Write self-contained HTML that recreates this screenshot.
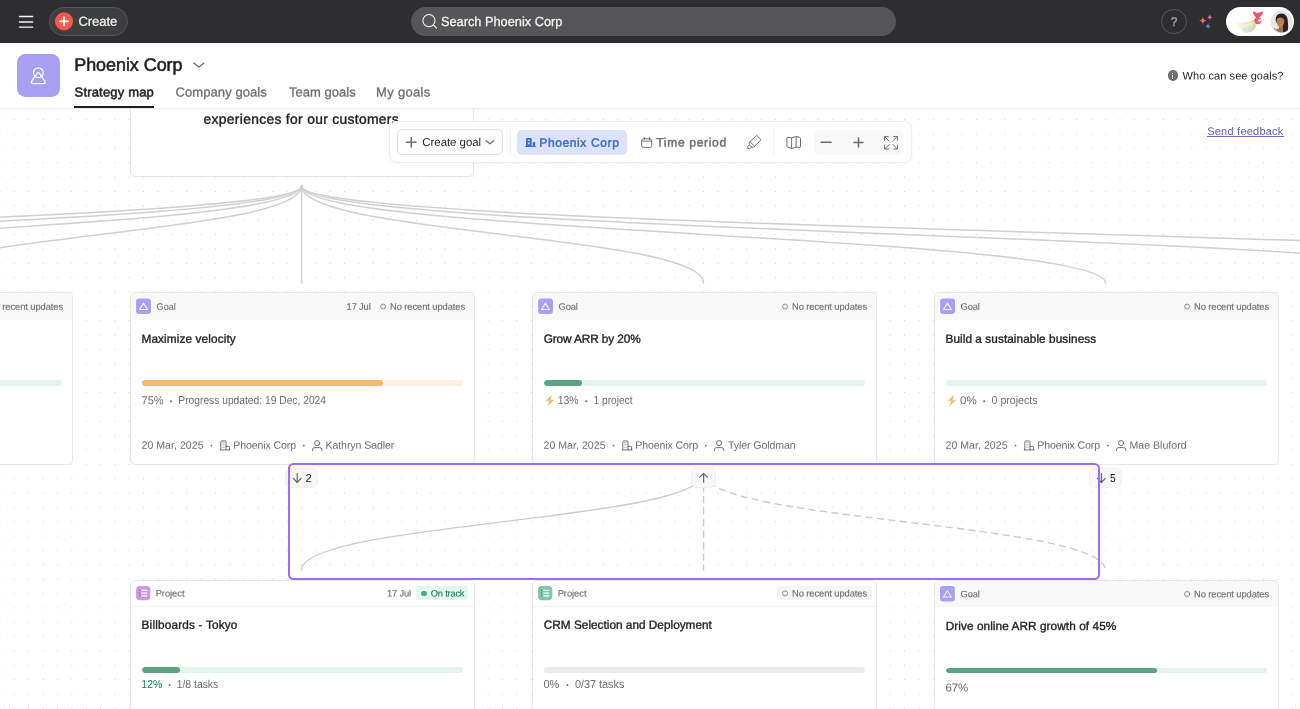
<!DOCTYPE html>
<html><head><meta charset="utf-8"><title>Strategy map</title>
<style>
html,body{margin:0;padding:0}
body{width:1300px;height:709px;overflow:hidden;position:relative;background:#fff;font-family:"Liberation Sans",sans-serif;}
#w{position:absolute;left:0;top:0;width:1300px;height:709px;overflow:hidden;will-change:transform}
.t{position:absolute;white-space:pre;line-height:20px;transform-origin:0 70%;}
.a{position:absolute;box-sizing:border-box;}
#canvas{left:0;top:109px;width:1300px;height:600px;background-color:#fff;
 background-image:radial-gradient(circle at center,#cccccc 0,#cccccc 0.5px,rgba(204,204,204,0) 0.95px);
 background-size:14.36px 14.36px;background-position:-7.23px 3.5px;}
.card{background:#fff;border:1px solid #e8e7e7;border-radius:5px;overflow:hidden}
.ico{border-radius:3px}
.bar{height:5.5px;border-radius:3px;overflow:hidden}
.bar i{display:block;height:100%;border-radius:3px}
.badge{background:#f8f7f7;border-radius:6px;border:1px solid #f2f0ef}
svg{position:absolute;overflow:visible}
.v{left:0;top:0}
</style></head><body><div id="w">
<div id="canvas" class="a"></div>

<svg class="a" style="left:0;top:0" width="1300" height="709" viewBox="0 0 1300 709"><g fill="none" stroke="#d1cfcf" stroke-width="1.5" stroke-linecap="round">
<path d="M301.6,186.0 C301.6,234.5 -1306.4,234.5 -1306.4,283.0"/>
<path d="M301.6,186.0 C301.6,234.5 -904.4,234.5 -904.4,283.0"/>
<path d="M301.6,186.0 C301.6,234.5 -502.4,234.5 -502.4,283.0"/>
<path d="M301.6,186.0 C301.6,234.5 -100.4,234.5 -100.4,283.0"/>
<path d="M301.6,186 L301.6,283"/>
<path d="M301.6,186.0 C301.6,234.5 703.6,234.5 703.6,283.0"/>
<path d="M301.6,186.0 C301.6,234.5 1105.6,234.5 1105.6,283.0"/>
<path d="M301.6,186.0 C301.6,234.5 1507.6,234.5 1507.6,283.0"/>
<path d="M301.6,186.0 C301.6,234.5 1909.6,234.5 1909.6,283.0"/>
</g><g fill="none" stroke="#cccaca" stroke-width="1.35">
<path d="M703.6,473.0 C703.6,521.8 301.3,521.8 301.3,570.5"/>
<path d="M703.6,473 L703.6,570.5" stroke-dasharray="7.2 4.3"/>
<path d="M703.6,473.0 C703.6,521.8 1105.5,521.8 1105.5,570.5" stroke-dasharray="7.2 4.3"/>
</g></svg>
<div class="a card" style="left:-272px;top:292px;width:344.5px;height:173px;"></div>
<div class="a" style="left:-271px;top:293px;width:342.5px;height:27.1px;background:#f9f8f8;border-radius:4px 4px 0 0"></div>
<span class="t" style="left:-12px;top:296px;font-size:9.4px;color:#6d6e6f;transform:translate(0.05px,0.75px) rotate(.03deg);letter-spacing:-0.097px;-webkit-text-stroke:0.12px currentColor;">No recent updates</span>
<div class="a bar" style="left:-260px;top:380.4px;width:321px;background:#e4f4ed"></div>
<div class="a card" style="left:130px;top:292px;width:344.5px;height:173px;"></div>
<div class="a" style="left:131px;top:293px;width:342.5px;height:27.1px;background:#f9f8f8;border-radius:4px 4px 0 0"></div>
<svg class="v" width="1300" height="709" viewBox="0 0 1300 709"><g transform="translate(136.1,298.4)"><rect width="14.9" height="15.5" rx="2.9" fill="#a8a0f4"/><path d="M7.4 4.75L11.3 11.05H3.5Z" fill="none" stroke="#fff" stroke-opacity=".88" stroke-width="1.05" stroke-linejoin="round"/></g></svg>
<span class="t" style="left:156px;top:296px;font-size:9.4px;color:#6d6e6f;transform:translate(0.57px,0.75px) rotate(.03deg) scaleX(0.9680);-webkit-text-stroke:0.12px currentColor;">Goal</span>
<span class="t" style="left:346px;top:296px;font-size:9.4px;color:#6d6e6f;transform:translate(0.6px,0.75px) rotate(.03deg);letter-spacing:-0.180px;-webkit-text-stroke:0.12px currentColor;">17 Jul</span>
<svg class="v" width="1300" height="709" viewBox="0 0 1300 709"><circle cx="383.10" cy="306.60" r="2.5" fill="none" stroke="#7f8081" stroke-width=".9"/></svg>
<span class="t" style="left:390px;top:296px;font-size:9.4px;color:#6d6e6f;transform:translate(0.05px,0.75px) rotate(.03deg);letter-spacing:-0.097px;-webkit-text-stroke:0.12px currentColor;">No recent updates</span>
<span class="t" style="left:141px;top:328px;font-size:11.8px;color:#1e1f21;transform:translate(0.45px,0.75px) rotate(.03deg);letter-spacing:0.116px;-webkit-text-stroke:0.35px currentColor;">Maximize velocity</span>
<div class="a bar" style="left:142px;top:380.4px;width:321px;background:#fdf0e2"><i style="width:240.5px;background:#f1bd6c"></i></div>
<span class="t" style="left:141px;top:390px;font-size:11.5px;color:#6d6e6f;transform:translate(0.52px,0.25px) rotate(.03deg) scaleX(0.9618);">75%</span>
<svg class="v" width="1300" height="709" viewBox="0 0 1300 709"><circle cx="171.05" cy="401.30" r="1.05" fill="#6d6e6f"/></svg>
<span class="t" style="left:178px;top:390px;font-size:11.5px;color:#6d6e6f;transform:translate(0.31px,0.25px) rotate(.03deg) scaleX(0.8919);">Progress updated: 19 Dec, 2024</span>
<span class="t" style="left:141px;top:434px;font-size:10.6px;color:#6d6e6f;transform:translate(0.5px,0.75px) rotate(.03deg);letter-spacing:0.018px;">20 Mar, 2025</span>
<svg class="v" width="1300" height="709" viewBox="0 0 1300 709"><circle cx="211.50" cy="445.60" r="0.9" fill="#6d6e6f"/></svg>
<svg class="v" width="1300" height="709" viewBox="0 0 1300 709"><g transform="translate(219.9,440.1)"><g fill="none" stroke="#6d6e6f" stroke-width=".95" stroke-linejoin="round" stroke-linecap="round"><path d="M.9 9.8V1.7Q.9.8 1.8.8H5.2Q6.1.8 6.1 1.7V9.8"/><path d="M6.1 6.3H8.9Q9.6 6.3 9.6 7V9.8"/><path d="M.3 9.8H10.1"/><path d="M2.5 2.5H4.6M2.5 4.6H4.6M2.5 7.1H4.6" stroke-width=".7" stroke="#9c9b9c"/></g></g></svg>
<span class="t" style="left:233px;top:434px;font-size:10.6px;color:#6d6e6f;transform:translate(0.35px,0.75px) rotate(.03deg);letter-spacing:-0.127px;">Phoenix Corp</span>
<svg class="v" width="1300" height="709" viewBox="0 0 1300 709"><circle cx="303.80" cy="445.60" r="0.9" fill="#6d6e6f"/></svg>
<svg class="v" width="1300" height="709" viewBox="0 0 1300 709"><g transform="translate(312,440)"><g fill="none" stroke="#6d6e6f" stroke-width="1" stroke-linecap="round"><circle cx="5.1" cy="3.1" r="2.55"/><path d="M.5 10.6V9.4Q.5 7.6 2.8 7.6H7.5Q9.8 7.6 9.8 9.4V10.6"/></g></g></svg>
<span class="t" style="left:325px;top:434px;font-size:10.6px;color:#6d6e6f;transform:translate(0.45px,0.75px) rotate(.03deg);letter-spacing:-0.088px;">Kathryn Sadler</span>
<div class="a card" style="left:532px;top:292px;width:344.5px;height:173px;"></div>
<div class="a" style="left:533px;top:293px;width:342.5px;height:27.1px;background:#f9f8f8;border-radius:4px 4px 0 0"></div>
<svg class="v" width="1300" height="709" viewBox="0 0 1300 709"><g transform="translate(538.1,298.4)"><rect width="14.9" height="15.5" rx="2.9" fill="#a8a0f4"/><path d="M7.4 4.75L11.3 11.05H3.5Z" fill="none" stroke="#fff" stroke-opacity=".88" stroke-width="1.05" stroke-linejoin="round"/></g></svg>
<span class="t" style="left:558px;top:296px;font-size:9.4px;color:#6d6e6f;transform:translate(0.55px,0.75px) rotate(.03deg);letter-spacing:-0.200px;-webkit-text-stroke:0.12px currentColor;">Goal</span>
<svg class="v" width="1300" height="709" viewBox="0 0 1300 709"><circle cx="785.10" cy="306.60" r="2.5" fill="none" stroke="#7f8081" stroke-width=".9"/></svg>
<span class="t" style="left:792px;top:296px;font-size:9.4px;color:#6d6e6f;transform:translate(0.05px,0.75px) rotate(.03deg);letter-spacing:-0.097px;-webkit-text-stroke:0.12px currentColor;">No recent updates</span>
<span class="t" style="left:543px;top:328px;font-size:11.8px;color:#1e1f21;transform:translate(0.7px,0.75px) rotate(.03deg);letter-spacing:-0.096px;-webkit-text-stroke:0.35px currentColor;">Grow ARR by 20%</span>
<div class="a bar" style="left:544px;top:380.4px;width:321px;background:#e4f4ed"><i style="width:38.4px;background:#5da283"></i></div>
<svg class="v" width="1300" height="709" viewBox="0 0 1300 709"><g transform="translate(545.6,395.2)"><path d="M5.9.4L.3 5.5H4L2.3 10.4L8.2 5H4.9Z" fill="#f1bd6c" stroke="#f1bd6c" stroke-width=".5" stroke-linejoin="round"/></g></svg>
<span class="t" style="left:557px;top:390px;font-size:11.5px;color:#6d6e6f;transform:translate(0.72px,0.25px) rotate(.03deg) scaleX(0.9091);">13%</span>
<svg class="v" width="1300" height="709" viewBox="0 0 1300 709"><circle cx="586.30" cy="401.30" r="1.05" fill="#6d6e6f"/></svg>
<span class="t" style="left:593px;top:390px;font-size:11.5px;color:#6d6e6f;transform:translate(0.54px,0.25px) rotate(.03deg) scaleX(0.8832);">1 project</span>
<span class="t" style="left:543px;top:434px;font-size:10.6px;color:#6d6e6f;transform:translate(0.5px,0.75px) rotate(.03deg);letter-spacing:0.018px;">20 Mar, 2025</span>
<svg class="v" width="1300" height="709" viewBox="0 0 1300 709"><circle cx="613.50" cy="445.60" r="0.9" fill="#6d6e6f"/></svg>
<svg class="v" width="1300" height="709" viewBox="0 0 1300 709"><g transform="translate(621.9,440.1)"><g fill="none" stroke="#6d6e6f" stroke-width=".95" stroke-linejoin="round" stroke-linecap="round"><path d="M.9 9.8V1.7Q.9.8 1.8.8H5.2Q6.1.8 6.1 1.7V9.8"/><path d="M6.1 6.3H8.9Q9.6 6.3 9.6 7V9.8"/><path d="M.3 9.8H10.1"/><path d="M2.5 2.5H4.6M2.5 4.6H4.6M2.5 7.1H4.6" stroke-width=".7" stroke="#9c9b9c"/></g></g></svg>
<span class="t" style="left:635px;top:434px;font-size:10.6px;color:#6d6e6f;transform:translate(0.35px,0.75px) rotate(.03deg);letter-spacing:-0.127px;">Phoenix Corp</span>
<svg class="v" width="1300" height="709" viewBox="0 0 1300 709"><circle cx="705.80" cy="445.60" r="0.9" fill="#6d6e6f"/></svg>
<svg class="v" width="1300" height="709" viewBox="0 0 1300 709"><g transform="translate(714,440)"><g fill="none" stroke="#6d6e6f" stroke-width="1" stroke-linecap="round"><circle cx="5.1" cy="3.1" r="2.55"/><path d="M.5 10.6V9.4Q.5 7.6 2.8 7.6H7.5Q9.8 7.6 9.8 9.4V10.6"/></g></g></svg>
<span class="t" style="left:727px;top:434px;font-size:10.6px;color:#6d6e6f;transform:translate(0.95px,0.75px) rotate(.03deg);letter-spacing:-0.100px;">Tyler Goldman</span>
<div class="a card" style="left:934px;top:292px;width:344.5px;height:173px;"></div>
<div class="a" style="left:935px;top:293px;width:342.5px;height:27.1px;background:#f9f8f8;border-radius:4px 4px 0 0"></div>
<svg class="v" width="1300" height="709" viewBox="0 0 1300 709"><g transform="translate(940.1,298.4)"><rect width="14.9" height="15.5" rx="2.9" fill="#a8a0f4"/><path d="M7.4 4.75L11.3 11.05H3.5Z" fill="none" stroke="#fff" stroke-opacity=".88" stroke-width="1.05" stroke-linejoin="round"/></g></svg>
<span class="t" style="left:960px;top:296px;font-size:9.4px;color:#6d6e6f;transform:translate(0.55px,0.75px) rotate(.03deg);letter-spacing:-0.200px;-webkit-text-stroke:0.12px currentColor;">Goal</span>
<svg class="v" width="1300" height="709" viewBox="0 0 1300 709"><circle cx="1187.10" cy="306.60" r="2.5" fill="none" stroke="#7f8081" stroke-width=".9"/></svg>
<span class="t" style="left:1194px;top:296px;font-size:9.4px;color:#6d6e6f;transform:translate(0.05px,0.75px) rotate(.03deg);letter-spacing:-0.097px;-webkit-text-stroke:0.12px currentColor;">No recent updates</span>
<span class="t" style="left:945px;top:328px;font-size:11.8px;color:#1e1f21;transform:translate(0.45px,0.75px) rotate(.03deg);letter-spacing:0.067px;-webkit-text-stroke:0.35px currentColor;">Build a sustainable business</span>
<div class="a bar" style="left:946px;top:380.4px;width:321px;background:#e4f4ed"><i style="width:0px;background:#5da283"></i></div>
<svg class="v" width="1300" height="709" viewBox="0 0 1300 709"><g transform="translate(947.6,395.2)"><path d="M5.9.4L.3 5.5H4L2.3 10.4L8.2 5H4.9Z" fill="#f1bd6c" stroke="#f1bd6c" stroke-width=".5" stroke-linejoin="round"/></g></svg>
<span class="t" style="left:959px;top:390px;font-size:11.5px;color:#6d6e6f;transform:translate(0.9px,0.25px) rotate(.03deg);letter-spacing:0.250px;">0%</span>
<svg class="v" width="1300" height="709" viewBox="0 0 1300 709"><circle cx="984.30" cy="401.30" r="1.05" fill="#6d6e6f"/></svg>
<span class="t" style="left:991px;top:390px;font-size:11.5px;color:#6d6e6f;transform:translate(0.54px,0.25px) rotate(.03deg) scaleX(0.9224);">0 projects</span>
<span class="t" style="left:945px;top:434px;font-size:10.6px;color:#6d6e6f;transform:translate(0.5px,0.75px) rotate(.03deg);letter-spacing:0.018px;">20 Mar, 2025</span>
<svg class="v" width="1300" height="709" viewBox="0 0 1300 709"><circle cx="1015.50" cy="445.60" r="0.9" fill="#6d6e6f"/></svg>
<svg class="v" width="1300" height="709" viewBox="0 0 1300 709"><g transform="translate(1023.9,440.1)"><g fill="none" stroke="#6d6e6f" stroke-width=".95" stroke-linejoin="round" stroke-linecap="round"><path d="M.9 9.8V1.7Q.9.8 1.8.8H5.2Q6.1.8 6.1 1.7V9.8"/><path d="M6.1 6.3H8.9Q9.6 6.3 9.6 7V9.8"/><path d="M.3 9.8H10.1"/><path d="M2.5 2.5H4.6M2.5 4.6H4.6M2.5 7.1H4.6" stroke-width=".7" stroke="#9c9b9c"/></g></g></svg>
<span class="t" style="left:1037px;top:434px;font-size:10.6px;color:#6d6e6f;transform:translate(0.35px,0.75px) rotate(.03deg);letter-spacing:-0.127px;">Phoenix Corp</span>
<svg class="v" width="1300" height="709" viewBox="0 0 1300 709"><circle cx="1107.80" cy="445.60" r="0.9" fill="#6d6e6f"/></svg>
<svg class="v" width="1300" height="709" viewBox="0 0 1300 709"><g transform="translate(1116,440)"><g fill="none" stroke="#6d6e6f" stroke-width="1" stroke-linecap="round"><circle cx="5.1" cy="3.1" r="2.55"/><path d="M.5 10.6V9.4Q.5 7.6 2.8 7.6H7.5Q9.8 7.6 9.8 9.4V10.6"/></g></g></svg>
<span class="t" style="left:1129px;top:434px;font-size:10.6px;color:#6d6e6f;transform:translate(0.45px,0.75px) rotate(.03deg);">Mae Bluford</span>
<div class="a card" style="left:129.5px;top:60px;width:344.5px;height:117px;border-radius:5px"></div>
<span class="t" style="left:203px;top:109px;font-size:13.8px;color:#1e1f21;transform:translate(0.55px,0.75px) rotate(.03deg);letter-spacing:0.339px;-webkit-text-stroke:0.4px currentColor;">experiences for our customers</span>
<div class="a card" style="left:130px;top:580px;width:344.5px;height:160px;"></div>
<div class="a" style="left:131px;top:606px;width:342.5px;height:1px;background:#f4f2f1"></div>
<svg class="v" width="1300" height="709" viewBox="0 0 1300 709"><g transform="translate(136.1,586)"><rect width="14.2" height="14.2" rx="3.6" fill="#cf97ea"/><g stroke="#fff" stroke-width="1.25" stroke-linecap="round"><path d="M5.7 4.4H10.6M5.7 7.1H10.6M5.7 9.8H10.6"/></g><g fill="#7a3f9e"><circle cx="3.5" cy="4.4" r=".65"/><circle cx="3.5" cy="7.1" r=".65"/><circle cx="3.5" cy="9.8" r=".65"/></g></g></svg>
<span class="t" style="left:155px;top:583px;font-size:9.4px;color:#6d6e6f;transform:translate(0.65px,0.5px) rotate(.03deg);letter-spacing:-0.050px;-webkit-text-stroke:0.12px currentColor;">Project</span>
<span class="t" style="left:141px;top:614px;font-size:11.8px;color:#1e1f21;transform:translate(0.55px,0.75px) rotate(.03deg);letter-spacing:0.174px;-webkit-text-stroke:0.35px currentColor;">Billboards - Tokyo</span>
<span class="t" style="left:387px;top:583px;font-size:9.4px;color:#6d6e6f;transform:translate(0.1px,0.5px) rotate(.03deg);letter-spacing:-0.200px;-webkit-text-stroke:0.12px currentColor;">17 Jul</span>
<div class="a" style="left:416.4px;top:586.3px;width:51.6px;height:13.8px;border-radius:3.5px;background:#e5f5ef"></div>
<div class="a" style="left:420.9px;top:590.6px;width:5.8px;height:5.8px;border-radius:50%;background:#5da283"></div>
<span class="t" style="left:430px;top:583px;font-size:9.3px;color:#148559;transform:translate(0.75px,0.5px) rotate(.03deg);letter-spacing:-0.200px;-webkit-text-stroke:0.12px currentColor;">On track</span>
<div class="a bar" style="left:142px;top:667px;width:321px;background:#e4f4ed"><i style="width:38px;background:#5da283"></i></div>
<span class="t" style="left:141px;top:674px;font-size:11.5px;color:#0d7f56;transform:translate(0.32px,0px) rotate(.03deg) scaleX(0.9091);">12%</span>
<svg class="v" width="1300" height="709" viewBox="0 0 1300 709"><circle cx="169.60" cy="685.00" r="1.05" fill="#6d6e6f"/></svg>
<span class="t" style="left:176px;top:674px;font-size:11.5px;color:#6d6e6f;transform:translate(0.72px,0px) rotate(.03deg) scaleX(0.9022);">1/8 tasks</span>
<div class="a card" style="left:532px;top:580px;width:344.5px;height:160px;"></div>
<div class="a" style="left:533px;top:606px;width:342.5px;height:1px;background:#f4f2f1"></div>
<svg class="v" width="1300" height="709" viewBox="0 0 1300 709"><g transform="translate(538.1,586)"><rect width="14.2" height="14.2" rx="3.6" fill="#7ec9a6"/><g stroke="#fff" stroke-width="1.25" stroke-linecap="round"><path d="M5.7 4.4H10.6M5.7 7.1H10.6M5.7 9.8H10.6"/></g><g fill="#2f7d59"><circle cx="3.5" cy="4.4" r=".65"/><circle cx="3.5" cy="7.1" r=".65"/><circle cx="3.5" cy="9.8" r=".65"/></g></g></svg>
<span class="t" style="left:557px;top:583px;font-size:9.4px;color:#6d6e6f;transform:translate(0.65px,0.5px) rotate(.03deg);letter-spacing:-0.050px;-webkit-text-stroke:0.12px currentColor;">Project</span>
<span class="t" style="left:543px;top:614px;font-size:11.8px;color:#1e1f21;transform:translate(0.8px,0.75px) rotate(.03deg);letter-spacing:0.007px;-webkit-text-stroke:0.35px currentColor;">CRM Selection and Deployment</span>
<div class="a" style="left:777px;top:586.3px;width:94.5px;height:13.8px;border-radius:3px;background:#f6f5f5"></div>
<svg class="v" width="1300" height="709" viewBox="0 0 1300 709"><circle cx="785.10" cy="593.40" r="2.5" fill="none" stroke="#7f8081" stroke-width=".9"/></svg>
<span class="t" style="left:792px;top:583px;font-size:9.4px;color:#6d6e6f;transform:translate(0.05px,0.5px) rotate(.03deg);letter-spacing:-0.097px;-webkit-text-stroke:0.12px currentColor;">No recent updates</span>
<div class="a bar" style="left:544px;top:667px;width:321px;background:#ecebea"></div>
<span class="t" style="left:543px;top:674px;font-size:11.5px;color:#6d6e6f;transform:translate(0.52px,0px) rotate(.03deg) scaleX(0.9524);">0%</span>
<svg class="v" width="1300" height="709" viewBox="0 0 1300 709"><circle cx="567.40" cy="685.00" r="1.05" fill="#6d6e6f"/></svg>
<span class="t" style="left:574px;top:674px;font-size:11.5px;color:#6d6e6f;transform:translate(0.93px,0px) rotate(.03deg) scaleX(0.9437);">0/37 tasks</span>
<div class="a card" style="left:934px;top:580px;width:344.5px;height:160px;"></div>
<div class="a" style="left:935px;top:581px;width:342.5px;height:26.4px;background:#f9f8f8;border-radius:4px 4px 0 0"></div>
<svg class="v" width="1300" height="709" viewBox="0 0 1300 709"><g transform="translate(940,586)"><rect width="14.9" height="15.5" rx="2.9" fill="#a8a0f4"/><path d="M7.4 4.75L11.3 11.05H3.5Z" fill="none" stroke="#fff" stroke-opacity=".88" stroke-width="1.05" stroke-linejoin="round"/></g></svg>
<span class="t" style="left:960px;top:584px;font-size:9.4px;color:#6d6e6f;transform:translate(0.6px,0.25px) rotate(.03deg);letter-spacing:-0.183px;-webkit-text-stroke:0.12px currentColor;">Goal</span>
<svg class="v" width="1300" height="709" viewBox="0 0 1300 709"><circle cx="1187.10" cy="594.00" r="2.5" fill="none" stroke="#7f8081" stroke-width=".9"/></svg>
<span class="t" style="left:1194px;top:584px;font-size:9.4px;color:#6d6e6f;transform:translate(0.05px,0.25px) rotate(.03deg);letter-spacing:-0.097px;-webkit-text-stroke:0.12px currentColor;">No recent updates</span>
<span class="t" style="left:945px;top:615px;font-size:11.8px;color:#1e1f21;transform:translate(0.65px,1px) rotate(.03deg);letter-spacing:0.072px;-webkit-text-stroke:0.35px currentColor;">Drive online ARR growth of 45%</span>
<div class="a bar" style="left:946px;top:667.6px;width:321px;background:#e4f4ed"><i style="width:211.4px;background:#5da283"></i></div>
<span class="t" style="left:945px;top:677px;font-size:11.5px;color:#6d6e6f;transform:translate(0.5px,0.5px) rotate(.03deg);letter-spacing:-0.125px;">67%</span>
<div class="a badge" style="left:285px;top:467.5px;width:33px;height:20.5px"></div>
<svg class="v" width="1300" height="709" viewBox="0 0 1300 709"><path d="M297.2 473.5V482.2M293.3 478.4L297.2 482.5L301.09999999999997 478.4" fill="none" stroke="#67686a" stroke-width="1.2" stroke-linecap="round" stroke-linejoin="round"/></svg>
<span class="t" style="left:305px;top:467px;font-size:11.5px;color:#1e1f21;transform:translate(0.61px,1px) rotate(.03deg) scaleX(0.9714);">2</span>
<div class="a badge" style="left:1089.2px;top:467.5px;width:33px;height:20.5px"></div>
<svg class="v" width="1300" height="709" viewBox="0 0 1300 709"><path d="M1101.4 473.5V482.2M1097.5 478.4L1101.4 482.5L1105.3000000000002 478.4" fill="none" stroke="#67686a" stroke-width="1.2" stroke-linecap="round" stroke-linejoin="round"/></svg>
<span class="t" style="left:1109px;top:467px;font-size:11.5px;color:#1e1f21;transform:translate(0.95px,1px) rotate(.03deg) scaleX(0.8909);">5</span>
<div class="a badge" style="left:691.4px;top:467.4px;width:24.4px;height:20.5px"></div>
<svg class="v" width="1300" height="709" viewBox="0 0 1300 709"><path d="M703.6 482.2V473.6M699.7 477.4L703.6 473.5L707.5 477.4" fill="none" stroke="#67686a" stroke-width="1.2" stroke-linecap="round" stroke-linejoin="round"/></svg>
<svg class="v" width="1300" height="709" viewBox="0 0 1300 709"><rect x="289" y="464" width="810" height="115" rx="4.6" fill="none" stroke="#9b6dfa" stroke-width="2.05"/></svg>
<div class="a" style="left:388.6px;top:121.3px;width:523px;height:41.8px;background:#fff;border:1px solid #efeeed;border-radius:8px;box-shadow:0 1px 3px rgba(0,0,0,.04)"></div>
<div class="a" style="left:397px;top:129.3px;width:105.6px;height:25.5px;border:1px solid #e1dfde;border-radius:5px;background:#fff"></div>
<svg style="left:406px;top:137.1px" width="10.6" height="10.6" viewBox="0 0 10.6 10.6"><path d="M5.3 .5V10.1M.5 5.3H10.1" stroke="#6d6e6f" stroke-width="1.55" stroke-linecap="round" fill="none"/></svg>
<span class="t" style="left:422px;top:132px;font-size:11.5px;color:#2a2b2d;transform:translate(0.3px,0px) rotate(.03deg);letter-spacing:-0.065px;">Create goal</span>
<svg class="v" width="1300" height="709" viewBox="0 0 1300 709"><path d="M486.15 140.75L489.9 143.85L493.65 140.75" stroke="#6d6e6f" stroke-width="1.25" stroke-linecap="round" stroke-linejoin="round" fill="none"/></svg>
<div class="a" style="left:510px;top:129.4px;width:1px;height:25.2px;background:#f2f1f0"></div>
<div class="a" style="left:517.4px;top:129.6px;width:109.2px;height:25.2px;border-radius:5px;background:#dde2fb"></div>
<svg class="v" width="1300" height="709" viewBox="0 0 1300 709"><path fill="#3f6bc9" fill-rule="evenodd" d="M526.9 138H530.8Q531.7 138 531.7 138.9V146H532.7V142.9Q532.7 142 533.6 142H534.3Q535.2 142 535.2 142.9V146H535.4Q535.9 146 535.9 146.5T535.4 147H525.6Q525.1 147 525.1 146.5T525.6 146H526V138.9Q526 138 526.9 138ZM527.9 139.8H529.8V141.1H527.9ZM527.9 142.4H529.8V144.2H527.9Z"/></svg>
<span class="t" style="left:539px;top:132px;font-size:12.1px;color:#3f6bc9;transform:translate(0.25px,0.75px) rotate(.03deg);letter-spacing:0.577px;-webkit-text-stroke:0.45px currentColor;">Phoenix Corp</span>
<svg class="v" width="1300" height="709" viewBox="0 0 1300 709"><g transform="translate(641.1,137.2)" fill="none" stroke="#6d6e6f" stroke-width="1"><rect x=".55" y="1.6" width="10.1" height="8.6" rx="2"/><path d="M.55 3.95H10.65M3.3 .2V2.6M8.4 .2V2.6" stroke-linecap="round" stroke-width=".9"/></g></svg>
<span class="t" style="left:656px;top:132px;font-size:12.1px;color:#6d6e6f;transform:translate(0.25px,0.5px) rotate(.03deg);letter-spacing:0.655px;-webkit-text-stroke:0.45px currentColor;">Time period</span>
<svg class="v" width="1300" height="709" viewBox="0 0 1300 709"><g fill="none" stroke="#6d6e6f" stroke-width="1" stroke-linejoin="round" stroke-linecap="round"><path d="M750.5 141.4L756 135.9Q756.6 135.3 757.2 135.9L760.5 139.2Q761.1 139.8 760.5 140.4L754.8 146Z"/><path d="M750.5 141.4L749.6 142.3Q749.2 142.8 749.3 143.4L749.4 144.8L752 147.3L753.3 147.3Q753.8 147.3 754.2 146.9L754.8 146"/><path d="M749.4 144.9L747.2 147.2Q746.8 147.9 747.6 148.2L749.5 148.5Q750 148.5 750.4 148.2L751.6 147"/></g></svg>
<div class="a" style="left:773px;top:129.4px;width:1px;height:25.2px;background:#f2f1f0"></div>
<svg class="v" width="1300" height="709" viewBox="0 0 1300 709"><g fill="none" stroke="#6d6e6f" stroke-width="1" stroke-linejoin="round"><path d="M786.9 138Q786.9 137.1 787.8 137.2L791.6 137.9L796.1 136.5L799.6 137.3Q800.5 137.5 800.5 138.4V146.6Q800.5 147.6 799.6 147.45L796.1 147.1L791.6 148.5L787.8 147.3Q786.9 147.1 786.9 146.2Z"/><path d="M791.6 137.9V148.5M796.1 136.5V147.1"/></g></svg>
<div class="a" style="left:813.6px;top:129.6px;width:89.8px;height:25.3px;border-radius:5px;background:#f9f8f8"></div>
<svg class="v" width="1300" height="709" viewBox="0 0 1300 709"><path d="M821 142.2H831.1M854 142.4H863M858.5 137.9V146.9" stroke="#6d6e6f" stroke-width="1.55" stroke-linecap="round" fill="none"/></svg>
<svg style="left:883.8px;top:135.6px" width="14" height="13.6" viewBox="0 0 14 13.6"><g fill="none" stroke="#6d6e6f" stroke-width="1" stroke-linecap="round" stroke-linejoin="round"><path d="M8.6 5.2L13.2.6M9.6.6H13.4V4.4"/><path d="M5.4 8.4L.8 13M.6 9.2V13H4.4"/><path d="M.6 4.4V.6H4.4M.8.8L5 5" /><path d="M13.4 9.2V13H9.6M13.2 12.8L9 8.6"/></g></svg>
<div class="a" style="left:0;top:43px;width:1300px;height:66px;background:#fff;border-bottom:1px solid #ececeb"></div>
<div class="a" style="left:16.9px;top:54.3px;width:43px;height:42.8px;border-radius:8.5px;background:#a89ff2"></div>
<svg style="left:0;top:0" width="100" height="100" viewBox="0 0 100 100"><g fill="none" stroke="#fff" stroke-width="1.25" stroke-linejoin="round"><circle cx="38.3" cy="72.7" r="4.9"/><path d="M38.3 72.7Q39.1 72.7 39.6 73.5L44.9 81.2Q46 83.4 43.6 83.5H33Q30.6 83.4 31.7 81.2L37 73.5Q37.5 72.7 38.3 72.7Z"/></g></svg>
<span class="t" style="left:74px;top:54px;font-size:17.9px;color:#1e1f21;transform:translate(0.25px,0.75px) rotate(.03deg);letter-spacing:-0.014px;-webkit-text-stroke:0.55px currentColor;">Phoenix Corp</span>
<svg class="v" width="1300" height="709" viewBox="0 0 1300 709"><path d="M193.8 63.1L198.9 67.1L204 63.1" stroke="#6d6e6f" stroke-width="1.25" stroke-linecap="round" stroke-linejoin="round" fill="none"/></svg>
<span class="t" style="left:74px;top:82px;font-size:13px;color:#1e1f21;transform:translate(0.55px,0.5px) rotate(.03deg);letter-spacing:0.177px;-webkit-text-stroke:0.5px currentColor;">Strategy map</span>
<div class="a" style="left:74px;top:106.2px;width:80px;height:1.9px;background:#1e1f21"></div>
<span class="t" style="left:175px;top:82px;font-size:13px;color:#6d6e6f;transform:translate(0.5px,0.5px) rotate(.03deg);letter-spacing:0.083px;-webkit-text-stroke:0.3px currentColor;">Company goals</span>
<span class="t" style="left:289px;top:82px;font-size:13px;color:#6d6e6f;transform:translate(0px,0.5px) rotate(.03deg);letter-spacing:0.028px;-webkit-text-stroke:0.3px currentColor;">Team goals</span>
<span class="t" style="left:376px;top:82px;font-size:13px;color:#6d6e6f;transform:translate(0px,0.5px) rotate(.03deg);letter-spacing:0.321px;-webkit-text-stroke:0.3px currentColor;">My goals</span>
<div class="a" style="left:1167.5px;top:70.4px;width:10.6px;height:10.6px;border-radius:50%;background:#6d6e6f"></div>
<div class="a" style="left:1172.2px;top:72.6px;width:1.3px;height:1.5px;background:#fff"></div><div class="a" style="left:1172.2px;top:74.9px;width:1.3px;height:4px;background:#fff"></div>
<span class="t" style="left:1182px;top:65px;font-size:11px;color:#1e1f21;transform:translate(0.6px,0.5px) rotate(.03deg);letter-spacing:0.068px;">Who can see goals?</span>
<span class="t" style="left:1207px;top:120px;font-size:11px;color:#625cb8;transform:translate(0.2px,1px) rotate(.03deg);letter-spacing:0.229px;">Send feedback</span>
<div class="a" style="left:1207px;top:136px;width:76.6px;height:1px;background:#6f69c0"></div>
<div class="a" style="left:0;top:0;width:1300px;height:42.7px;background:#2e2e30"></div>
<svg class="v" width="1300" height="709" viewBox="0 0 1300 709"><path d="M19.5 16.55H32.6M19.5 21.95H32.6M19.5 27.15H32.6" stroke="#f5f4f3" stroke-width="1.4" stroke-linecap="round" fill="none"/></svg>
<div class="a" style="left:49.3px;top:7px;width:78.7px;height:29px;border-radius:14.5px;background:#3d3e40;border:1px solid #565557"></div>
<svg class="v" width="1300" height="709" viewBox="0 0 1300 709"><circle cx="64" cy="21.35" r="9.05" fill="#fb574b"/><path d="M64 17.3V25.4M59.95 21.35H68.05" stroke="#fff" stroke-width="1.9" stroke-linecap="round" fill="none"/></svg>
<span class="t" style="left:78px;top:11px;font-size:13px;color:#f5f4f3;transform:translate(0.4px,0.75px) rotate(.03deg);letter-spacing:-0.020px;-webkit-text-stroke:0.25px currentColor;">Create</span>
<div class="a" style="left:411px;top:7px;width:485px;height:29px;border-radius:14.5px;background:#565557"></div>
<svg style="left:421.5px;top:14px" width="16" height="16" viewBox="0 0 16 16"><g fill="none" stroke="#f5f4f3" stroke-width="1.1" stroke-linecap="round"><circle cx="6.95" cy="6.55" r="6.05"/><path d="M11.35 10.95L14.5 14.1"/></g></svg>
<span class="t" style="left:440px;top:11px;font-size:13.2px;color:#f5f4f3;transform:translate(0.92px,1px) rotate(.03deg) scaleX(0.9687);-webkit-text-stroke:0.25px currentColor;">Search Phoenix Corp</span>
<div class="a" style="left:1161.1px;top:8.6px;width:25.7px;height:25.7px;border-radius:50%;border:1px solid #58595b"></div>
<span class="t" style="left:1170px;top:12px;font-size:12.6px;color:#a9a8aa;transform:translate(0.67px,0px) rotate(.03deg) scaleX(0.9385);-webkit-text-stroke:0.3px currentColor;">?</span>
<svg class="v" width="1300" height="709" viewBox="0 0 1300 709"><defs><linearGradient id="sg1" x1="0" y1="0" x2="0" y2="1"><stop offset="0" stop-color="#fb6457"/><stop offset="1" stop-color="#ee6079"/></linearGradient><linearGradient id="sg2" x1="0" y1="0" x2="0" y2="1"><stop offset="0" stop-color="#f2607a"/><stop offset="1" stop-color="#d9639b"/></linearGradient><linearGradient id="sg3" x1="0" y1="0" x2="0" y2="1"><stop offset="0" stop-color="#8a6fe0"/><stop offset="1" stop-color="#5a7df0"/></linearGradient></defs><path fill="url(#sg1)" d="M1202.90 16.50Q1203.29 20.19 1206.80 20.60Q1203.29 21.01 1202.90 24.70Q1202.51 21.01 1199.00 20.60Q1202.51 20.19 1202.90 16.50Z"/><path fill="url(#sg2)" d="M1209.80 14.00Q1210.11 16.88 1212.90 17.20Q1210.11 17.52 1209.80 20.40Q1209.49 17.52 1206.70 17.20Q1209.49 16.88 1209.80 14.00Z"/><path fill="url(#sg3)" d="M1208.10 22.95Q1208.40 25.83 1211.10 26.15Q1208.40 26.47 1208.10 29.35Q1207.80 26.47 1205.10 26.15Q1207.80 25.83 1208.10 22.95Z"/></svg>
<div class="a" style="left:1226.3px;top:6.7px;width:67.6px;height:29.1px;border-radius:14.6px;background:#fff"></div>
<svg style="left:1226.3px;top:6.7px" width="67.6" height="29.1" viewBox="0 0 67.6 29.1">
<defs><filter id="bl" x="-20%" y="-20%" width="140%" height="140%"><feGaussianBlur stdDeviation="0.55"/></filter>
<linearGradient id="fd" x1="0" x2="1" y1="0" y2="0"><stop offset="0" stop-color="#fff" stop-opacity="0"/><stop offset=".55" stop-color="#fff" stop-opacity=".75"/><stop offset="1" stop-color="#fff" stop-opacity="1"/></linearGradient>
<mask id="mk"><rect x="8" y="8" width="24" height="22" fill="url(#fd)"/></mask>
<clipPath id="av"><circle cx="55.7" cy="15" r="10.4"/></clipPath></defs>
<g fill="none" stroke-linecap="round" filter="url(#bl)" mask="url(#mk)">
<path d="M28.2 13.6Q22 17.6 11.5 16.8" stroke="#f9c98c" stroke-width="1.8"/>
<path d="M28.5 15Q23.5 19.8 13 19" stroke="#f7de83" stroke-width="1.7"/>
<path d="M28.8 16.5Q25 21.8 14.6 21" stroke="#a9e3a4" stroke-width="1.6"/>
<path d="M29 18Q26.4 23.6 16.4 23" stroke="#a3c8f6" stroke-width="1.6"/>
<path d="M29.2 19.6Q27.6 25.4 18.3 24.8" stroke="#f8cf86" stroke-width="1.8"/>
</g>
<path fill="#f1576b" d="M26.8 4.5Q29.4 4.4 31 6.2Q32.6 5.2 34.2 5.6Q35.6 4.4 37 4.3Q37 7 35.4 8.6Q34.6 10.2 32.8 10.8Q34.4 11.3 35.4 10.6Q35 12.2 33.2 12.6Q32 12.6 31.6 13.4Q32.2 15.2 34.2 14.6Q35.2 14 35.6 13.2Q35.9 15.4 34.2 16.6Q32.2 17.8 30.4 17Q28.4 15.8 28.2 13.4Q28.4 11.4 30 10.4Q27.4 8.6 26.8 4.5Z"/>
<path fill="#5b6ee8" d="M33.6 5.7Q35 5 36.4 5.2L35.4 6.3Q34.4 6.5 33.6 5.7Z"/>
<circle cx="55.7" cy="15" r="10.9" fill="#cfe3df"/>
<circle cx="55.7" cy="15" r="10.4" fill="#e9e7e6"/>
<g clip-path="url(#av)" filter="url(#bl)">
<path fill="#2a201d" d="M49.6 13Q49.6 6.6 55 6.4Q60.6 6.4 61.6 12Q62.6 19 61.8 25Q58 27 55.6 25.4L56.4 18Q50 18 49.6 13Z"/>
<path fill="#a8714f" d="M48 26Q48.6 22.4 52.6 21.4L53.6 18.6H57V22Q57.4 24 57 26.4Z"/>
<ellipse cx="54.4" cy="14.6" rx="3.9" ry="5.1" fill="#b47d5b"/>
<path fill="#2a201d" d="M50.2 12.4Q50.6 8 55.4 8.2Q59 9 58.9 14Q57.6 10.6 54.4 10.4Q51.6 10.4 50.2 12.4Z"/>
<path fill="#f3e9e4" d="M52.8 16.9Q54.4 18 56.2 16.7Q54.6 18.9 52.8 16.9Z"/>
<path fill="#7b4fe0" d="M46.5 21.8L49 21.2L50.2 23.8L47.5 25Z"/>
</g></svg>
</div></body></html>
